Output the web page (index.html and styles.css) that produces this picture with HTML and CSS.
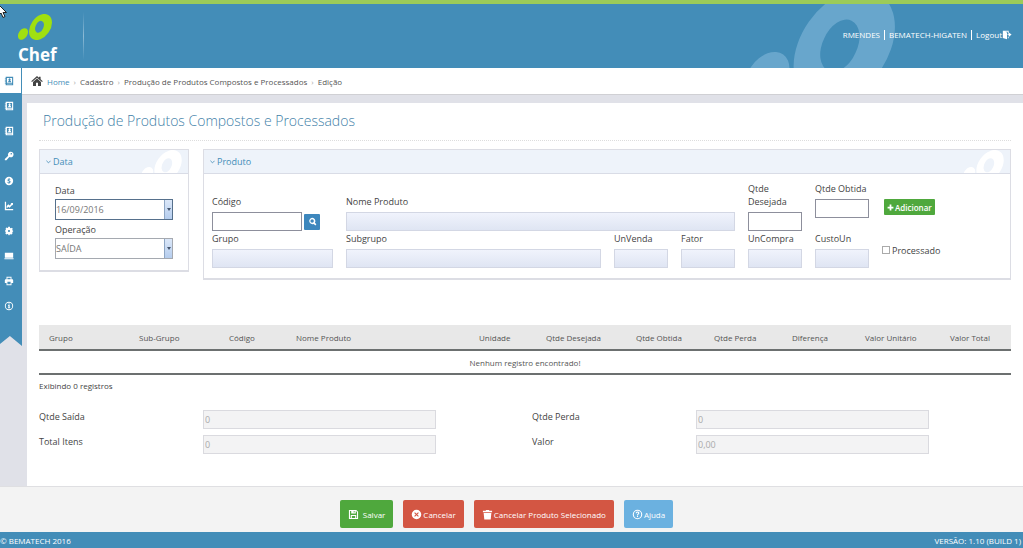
FILE: index.html
```
<!DOCTYPE html>
<html lang="pt-BR">
<head>
<meta charset="utf-8">
<title>Produção de Produtos Compostos e Processados</title>
<link rel="stylesheet" href="styles.css">
</head>
<body>
<svg class="defs" aria-hidden="true">
  <symbol id="mark" viewBox="0 0 34 26">
    <path fill-rule="evenodd" d="M14.47 7.38A9.8 14.3 35 1 1 30.53 18.62A9.8 14.3 35 1 1 14.47 7.38ZM17.97 11.150A3.900 6 25 1 1 25.030 14.450A3.900 6 25 1 1 17.970 11.150Z"/>
    <path d="M1.480 17.480A4.300 6.300 35 1 1 8.520 22.520A4.300 6.300 35 1 1 1.480 17.480Z"/>
  </symbol>
  <symbol id="book" viewBox="0 0 12 12">
    <path fill-rule="evenodd" d="M2 1h9v10H2V9H1V8h1V6.500H1v-1h1V4H1V3h1zM3.500 2.300v5.900h6.200V2.300zM3.500 9.200v.8h6.200v-.8z"/>
    <path d="M5 7.500c0-1.300.6-1.800 1.200-2a1.300 1.300 0 1 1 1 0c.7.200 1.300.7 1.300 2z"/>
  </symbol>
  <symbol id="key" viewBox="0 0 12 12"><path fill-rule="evenodd" d="M8 1a3.300 3.300 0 1 1-1.600 6.100L3 11H1v-1.500l4.100-3.700A3.300 3.300 0 0 1 8 1zM8.700 2.500a.9.900 0 1 0 .1 1.800.9.900 0 0 0-.1-1.800z"/></symbol>
  <symbol id="money" viewBox="0 0 12 12"><path fill-rule="evenodd" d="M6 1a5 5 0 1 1 0 10A5 5 0 0 1 6 1zM5.600 2.500v.7C4 3.500 3.700 6 5.500 6.400c1.300.3 1.100 1.300.3 1.300-.6 0-.8-.3-.9-.7l-1 .2c.1.700.7 1.200 1.500 1.400v.8h1v-.8c1.900-.4 2-2.800.2-3.200-1.400-.3-1.200-1.200-.5-1.200.4 0 .6.200.7.500l1-.2c-.1-.7-.6-1.100-1.200-1.300v-.7z"/></symbol>
  <symbol id="chart" viewBox="0 0 12 12"><path d="M1 1h1.500v8.500H11V11H1zM3.200 9V6l2-2.200 1.500 1.500 2-2-.8-.8h2.900v2.900l-.8-.8L6.700 8 5.200 6.900z"/></symbol>
  <symbol id="gear" viewBox="0 0 12 12"><path fill-rule="evenodd" d="M5 1h2l.3 1.300 1 .4 1.200-.7 1 1.400-.6 1 .4 1L11.200 6l-1 1.300-.3 1 .3 1-1.300 1-1.200-.5-.8.4L6.500 11h-1l-.5-1.100-1-.3-1.200.6-1.200-1.300.6-1.100-.3-1L1 6l1-1.300.3-1-.4-.9 1.300-1 1.100.6.6-.3zM6 4.700a1.300 1.300 0 1 0 0 2.600 1.300 1.300 0 0 0 0-2.600z"/></symbol>
  <symbol id="screen" viewBox="0 0 12 12"><path d="M1 2h10v6.200H1zM.5 8.800h11v1.200H.5z"/></symbol>
  <symbol id="print" viewBox="0 0 12 12"><path fill-rule="evenodd" d="M3 1h6v3h1a1 1 0 0 1 1 1v3.500H9V11H3V8.500H1V5a1 1 0 0 1 1-1h1zM4.100 2v2h3.800V2zM4.100 7v3h3.800V7z"/></symbol>
  <symbol id="info" viewBox="0 0 12 12"><path fill-rule="evenodd" d="M6 1a5 5 0 1 1 0 10A5 5 0 0 1 6 1zM6 2.100a3.900 3.900 0 1 0 0 7.800 3.900 3.900 0 0 0 0-7.800z"/><path d="M5.300 2.900h1.500v1.300H5.300zM4.800 4.900h2v3h.6v.9H4.700v-.9h.6V5.800h-.5z"/></symbol>
  <symbol id="home" viewBox="0 0 12 12"><path d="M6 1l2 1.800V1.700h1.600v2.600L11.800 6.300l-.8.800L6 2.700 1 7.100l-.8-.8zM6 3.500l4 3.600V11H7V7.800H5V11H2V7.100z"/></symbol>
  <symbol id="exit" viewBox="0 0 12 12"><path fill-rule="evenodd" d="M1 1h7v3H7V2H4l2 1v8L1 9.500zM7 8.500h1V5.800H6.500V4.700H8V3l3.500 2.500L8 8.500V10H7z"/></symbol>
  <symbol id="search" viewBox="0 0 12 12"><path fill-rule="evenodd" d="M5.500 1a4.300 4.300 0 0 1 3.700 6.600l2 2.200-1.400 1.400-2.100-2A4.300 4.300 0 1 1 5.500 1zM5.500 3a2.300 2.300 0 1 0 0 4.600 2.300 2.300 0 0 0 0-4.600z"/></symbol>
  <symbol id="plus" viewBox="0 0 12 12"><path d="M4.500 1h3v3.500H11v3H7.500V11h-3V7.500H1v-3h3.500z"/></symbol>
  <symbol id="save" viewBox="0 0 12 12"><path fill-rule="evenodd" d="M1 1h8l2 2v8H1zM2.200 2.200v7.600H3V6.500h6v3.300h.8V3.400L8.500 2.200V5H3.500V2.200zM6.200 2.200v1.600h1V2.200zM4.200 7.600v2.200h3.600V7.600z"/></symbol>
  <symbol id="times" viewBox="0 0 12 12"><path fill-rule="evenodd" d="M6 .8a5.200 5.200 0 1 1 0 10.400A5.200 5.200 0 0 1 6 .8zM4.300 3.500l-.8.800L5.200 6 3.500 7.700l.8.800L6 6.800l1.700 1.700.8-.8L6.800 6l1.700-1.700-.8-.8L6 5.200z"/></symbol>
  <symbol id="trash" viewBox="0 0 12 12"><path d="M4.200 1h3.600v1H11v1.600H1V2h3.200zM1.800 4.300h8.400L9.500 11.500h-7z"/></symbol>
  <symbol id="help" viewBox="0 0 12 12"><path fill-rule="evenodd" d="M6 .8a5.200 5.200 0 1 1 0 10.400A5.200 5.200 0 0 1 6 .8zM6 2a4 4 0 1 0 0 8 4 4 0 0 0 0-8z"/><path d="M4 4.600C4.200 2.200 8 2.300 8 4.500c0 1.200-1.400 1.300-1.400 2.300H5.400C5.400 5.300 6.700 5.300 6.700 4.500c0-.8-1.300-.8-1.400.2zM5.400 7.400h1.200v1.200H5.400z"/></symbol>
</svg>

<svg class="pointer" viewBox="0 0 8 16" aria-hidden="true"><path d="M-3.500.5 6.500 10.500H3l2 4-2 1-2-4.500-2 2z"/></svg>

<header class="topbar">
  <svg class="topbar-mark" aria-hidden="true"><use href="#mark"/></svg>
  <div class="brand">
    <svg class="brand-mark" aria-hidden="true"><use href="#mark"/></svg>
    <span class="brand-name">Chef</span>
  </div>
  <div class="topbar-rule"></div>
  <ul class="user">
    <li>RMENDES</li>
    <li>BEMATECH-HIGATEN</li>
    <li><a href="#">Logout<svg class="icon" aria-hidden="true"><use href="#exit"/></svg></a></li>
  </ul>
</header>

<div class="shell">
  <aside class="sidebar">
    <nav class="menu" aria-label="Menu">
      <a class="menu-item active" href="#" aria-label="Cadastro"><svg class="icon"><use href="#book"/></svg></a>
      <a class="menu-item" href="#" aria-label="Estoque"><svg class="icon"><use href="#book"/></svg></a>
      <a class="menu-item" href="#" aria-label="Produtos"><svg class="icon"><use href="#book"/></svg></a>
      <a class="menu-item" href="#" aria-label="Acesso"><svg class="icon"><use href="#key"/></svg></a>
      <a class="menu-item" href="#" aria-label="Financeiro"><svg class="icon"><use href="#money"/></svg></a>
      <a class="menu-item" href="#" aria-label="Gráficos"><svg class="icon"><use href="#chart"/></svg></a>
      <a class="menu-item" href="#" aria-label="Configuração"><svg class="icon"><use href="#gear"/></svg></a>
      <a class="menu-item" href="#" aria-label="Terminal"><svg class="icon"><use href="#screen"/></svg></a>
      <a class="menu-item" href="#" aria-label="Relatórios"><svg class="icon"><use href="#print"/></svg></a>
      <a class="menu-item" href="#" aria-label="Informações"><svg class="icon"><use href="#info"/></svg></a>
    </nav>
  </aside>

  <div class="main">
    <nav class="crumbs" aria-label="Trilha">
      <svg class="icon home" aria-hidden="true"><use href="#home"/></svg>
      <a href="#">Home</a><i>›</i><span>Cadastro</span><i>›</i><span>Produção de Produtos Compostos e Processados</span><i>›</i><span>Edição</span>
    </nav>

    <main class="page">
      <h1>Produção de Produtos Compostos e Processados</h1>

      <div class="panels">
        <section class="panel">
          <h2><svg class="chev" viewBox="0 0 6 4" aria-hidden="true"><path d="M.5.500 3 3 5.500.5"/></svg>Data<svg class="panel-mark" aria-hidden="true"><use href="#mark"/></svg></h2>
          <div class="panel-body stack">
            <label for="data">Data</label>
            <div class="combo focus"><input id="data" value="16/09/2016"><button type="button" class="combo-btn" aria-label="Abrir calendário"></button></div>
            <label for="oper">Operação</label>
            <div class="combo"><select id="oper"><option>SAÍDA</option></select><span class="combo-btn"></span></div>
          </div>
        </section>

        <section class="panel">
          <h2><svg class="chev" viewBox="0 0 6 4" aria-hidden="true"><path d="M.5.500 3 3 5.500.5"/></svg>Produto<svg class="panel-mark" aria-hidden="true"><use href="#mark"/></svg></h2>
          <div class="panel-body grid">
            <div class="field w2 end"><label for="codigo">Código</label>
              <div class="lookup"><input id="codigo"><button type="button" aria-label="Pesquisar"><svg class="icon"><use href="#search"/></svg></button></div></div>
            <div class="field w6 end"><label for="nome">Nome Produto</label><input id="nome" readonly></div>
            <div class="field end"><label for="desejada">Qtde Desejada</label><input id="desejada"></div>
            <div class="field"><label for="obtida">Qtde Obtida</label><input id="obtida"></div>
            <button type="button" class="add w2"><svg class="icon" aria-hidden="true"><use href="#plus"/></svg>Adicionar</button>

            <div class="field w2"><label for="grupo">Grupo</label><input id="grupo" readonly></div>
            <div class="field w4"><label for="subgrupo">Subgrupo</label><input id="subgrupo" readonly></div>
            <div class="field"><label for="unvenda">UnVenda</label><input id="unvenda" readonly></div>
            <div class="field"><label for="fator">Fator</label><input id="fator" readonly></div>
            <div class="field"><label for="uncompra">UnCompra</label><input id="uncompra" readonly></div>
            <div class="field"><label for="custoun">CustoUn</label><input id="custoun" readonly></div>
            <label class="check"><input type="checkbox">Processado</label>
          </div>
        </section>
      </div>

      <table class="items">
        <colgroup><col class="c89"><col class="c89"><col class="c67"><col class="c183"><col class="c67"><col class="c89"><col class="c78"><col class="c78"><col class="c73"><col class="c85"><col></colgroup>
        <thead><tr><th>Grupo</th><th>Sub-Grupo</th><th>Código</th><th>Nome Produto</th><th>Unidade</th><th>Qtde Desejada</th><th>Qtde Obtida</th><th>Qtde Perda</th><th>Diferença</th><th>Valor Unitário</th><th>Valor Total</th></tr></thead>
        <tbody><tr><td colspan="11">Nenhum registro encontrado!</td></tr></tbody>
      </table>
      <p class="count">Exibindo 0 registros</p>

      <div class="totals">
        <label for="saida">Qtde Saída</label><input id="saida" value="0" disabled>
        <label for="perda">Qtde Perda</label><input id="perda" value="0" disabled>
        <label for="itens">Total Itens</label><input id="itens" value="0" disabled>
        <label for="valor">Valor</label><input id="valor" value="0,00" disabled>
      </div>
    </main>
  </div>
</div>

<div class="actions">
  <button type="button" class="btn green"><svg class="icon" aria-hidden="true"><use href="#save"/></svg><span>Salvar</span></button>
  <button type="button" class="btn red"><svg class="icon" aria-hidden="true"><use href="#times"/></svg>Cancelar</button>
  <button type="button" class="btn red"><svg class="icon" aria-hidden="true"><use href="#trash"/></svg>Cancelar Produto Selecionado</button>
  <button type="button" class="btn sky"><svg class="icon" aria-hidden="true"><use href="#help"/></svg>Ajuda</button>
</div>
<footer class="footer"><span>© BEMATECH 2016</span><span>VERSÃO: 1.10 (BUILD 1)</span></footer>
</body>
</html>
```
FILE: styles.css
```
* { box-sizing: border-box; }
body {
  margin: 0;
  min-height: 100vh;
  display: flex;
  flex-direction: column;
  background: #fff;
  color: #444;
  font: 8px/13px "Open Sans", "Noto Sans", sans-serif;
}
input, select, button { font: inherit; color: inherit; margin: 0; border-radius: 0; }
input { min-width: 0; }
a { color: inherit; text-decoration: none; }
.defs { display: none; }
.icon { width: 10px; height: 10px; fill: currentColor; flex: none; }
.pointer {
  position: absolute;
  z-index: 2;
  top: 2px;
  left: 0;
  width: 8px;
  height: 16px;
  fill: #fff;
  stroke: #222;
}

.topbar {
  position: relative;
  overflow: hidden;
  display: flex;
  height: 68px;
  border-top: 4px solid #9ccb59;
  background: #438db8;
  color: #fff;
}
.topbar::before {
  content: "";
  position: absolute;
  inset: -4px 0 auto;
  height: 1px;
  background: #d5e6b4;
}
.topbar-mark {
  position: absolute;
  top: -15px;
  right: 128px;
  width: 150px;
  height: 115px;
  fill: #68a6cc;
}
.brand { width: 83px; padding: 10px 18px 0; }
.brand-mark { display: block; width: 34px; height: 26px; fill: #a0e010; }
.brand-name { display: block; font-size: 17px; font-weight: 700; line-height: 30px; }
.topbar-rule { width: 1px; margin: 8px 0; background: linear-gradient(#438db8, #8dbad5 50%, #438db8); }
.user {
  position: relative;
  display: flex;
  align-items: center;
  margin: 0 11px 0 auto;
  padding: 0 0 3px;
  list-style: none;
  line-height: 10px;
}
.user li + li { margin-left: 4px; padding-left: 4px; border-left: 1px solid #fff; }
.user a { display: flex; }

.shell { flex: 1; display: flex; background: #e0e1e8; }
.sidebar { width: 22px; }
.menu {
  height: 278px;
  background: #438db8;
  clip-path: polygon(0 0, 100% 0, 100% 100%, 45% 268px, 0 276px);
  color: #fff;
}
.menu-item { display: flex; align-items: center; height: 25px; padding-left: 4px; }
.menu-item.active { margin-right: 1px; background: #fff; color: #438db8; }

.main { flex: 1; display: flex; flex-direction: column; min-width: 0; }
.crumbs {
  display: flex;
  align-items: center;
  height: 27px;
  padding-left: 9px;
  border-bottom: 1px solid #d0d0d4;
  background: #fff;
  color: #555;
}
.crumbs .home { width: 12px; height: 12px; margin-right: 4px; fill: #444; }
.crumbs a { color: #438db8; }
.crumbs i { margin: 0 4px; color: #aaa; font-style: normal; }

.page { flex: 1; margin: 8px 0 0 5px; padding: 8px 12px 0; background: #fff; }
h1 {
  margin: 0 0 8px;
  padding: 0 4px 9px;
  border-bottom: 1px dotted #ddd;
  color: #3f7fa8;
  font-size: 14px;
  font-weight: 300;
  line-height: 20px;
}

.panels { display: grid; grid-template-columns: 150px 1fr; align-items: start; gap: 14px; font-size: 9px; }
.panel { border: 1px solid #dcdde4; border-bottom-width: 2px; }
.panel h2 {
  display: flex;
  align-items: center;
  gap: 2px;
  height: 24px;
  margin: 0;
  padding-left: 6px;
  overflow: hidden;
  border-bottom: 1px solid #d9dce6;
  background: #eef3fa;
  color: #438db8;
  font-size: 9px;
  font-weight: 400;
}
.chev { width: 5px; height: 4px; fill: none; stroke: #438db8; }
.panel-mark { align-self: start; width: 41px; height: 31px; margin: 0 6px 0 auto; fill: #fff; }
.panel-body { padding: 8px 7px 10px 8px; }
.stack { display: flex; flex-direction: column; padding: 8px 15px 10px; }
.stack label { line-height: 17px; }
.combo { display: flex; height: 21px; margin-bottom: 1px; border: 1px solid #a5a9b0; color: #777; }
.combo.focus { border-color: #56708c; }
.combo input, .combo select { flex: 1; appearance: none; padding: 0; border: 0; background: none; outline: 0; }
.combo-btn {
  display: grid;
  place-items: center;
  width: 8px;
  padding: 0;
  border: 0;
  border-left: 1px solid #8ea6c4;
  background: linear-gradient(#dbe7f8, #b5cdee);
}
.combo-btn::before { content: ""; border: 2px solid transparent; border-top: 3px solid #45566e; border-bottom: 0; }

.grid { display: grid; grid-template-columns: repeat(12, minmax(0, 1fr)); column-gap: 13px; row-gap: 1px; }
.w2 { grid-column: span 2; }
.w4 { grid-column: span 4; }
.w6 { grid-column: span 6; }
.field { display: flex; flex-direction: column; gap: 4px; }
.end { justify-content: flex-end; }
.field input { width: 100%; height: 19px; padding: 0 2px; border: 1px solid #8d8f9c; }
.field input:read-only { border-color: #d3d7e4; background: linear-gradient(#f0f3fc, #dfe5f3); }
.lookup { display: grid; grid-template-columns: 1fr 16px; gap: 2px; padding-right: 13px; }
.lookup button {
  display: grid;
  place-items: center;
  align-self: center;
  height: 16px;
  padding: 0;
  border: 0;
  border-radius: 1px;
  background: #3d87bd;
  color: #fff;
}
.lookup .icon { width: 9px; height: 9px; }
.add {
  display: flex;
  align-items: center;
  gap: 1px;
  justify-self: start;
  height: 16px;
  margin: 17px 0 0 2px;
  padding: 0 3px;
  border: 0;
  border-radius: 1px;
  background: #4fa83d;
  color: #fff;
  font-size: 8px;
  font-weight: 600;
}
.add .icon { width: 7px; height: 7px; }
.check { grid-column: span 2; display: flex; align-items: center; gap: 2px; }
.check input { appearance: none; width: 8px; height: 8px; border: 1px solid #aaa; background: #fff; }

.items { width: 100%; margin-top: 45px; border-collapse: collapse; table-layout: fixed; color: #555; }
.c67 { width: 67px; }
.c73 { width: 73px; }
.c78 { width: 78px; }
.c85 { width: 85px; }
.c89 { width: 90px; }
.c183 { width: 183px; }
.items th { height: 25px; padding: 0 0 0 10px; background: #e8e8e8; font-weight: 400; text-align: left; white-space: nowrap; }
.items td { height: 24px; padding: 0; border-top: 2px solid #6c7070; border-bottom: 2px solid #6c7070; text-align: center; }
.count { margin: 4px 0 18px; }

.totals {
  display: grid;
  grid-template-columns: 164px minmax(0, 1fr) 96px 164px minmax(0, 1fr) 82px;
  row-gap: 6px;
  font-size: 9px;
}
.totals label { line-height: 13px; }
.totals label:nth-of-type(odd) { grid-column: 1; }
.totals label:nth-of-type(even) { grid-column: 4; }
.totals input { height: 19px; padding: 0 1px; border: 1px solid #dadadf; background: #f3f3f4; color: #aaa; }

.actions {
  display: flex;
  justify-content: center;
  align-items: center;
  gap: 10px;
  height: 46px;
  padding: 8px 10px 0 0;
  border-top: 1px solid #dfdfe2;
  background: #f3f3f3;
}
.btn {
  display: flex;
  align-items: center;
  gap: 1px;
  height: 28px;
  padding: 2px 8px 0;
  border: 0;
  border-radius: 2px;
  color: #fff;
  white-space: nowrap;
}
.btn .icon { width: 11px; height: 11px; }
.green { gap: 4px; background: #4fa83d; }
.red { background: #d35643; }
.sky { background: #6bb1e0; }

.footer {
  display: flex;
  justify-content: space-between;
  align-items: center;
  height: 16px;
  padding: 0 2px 0 0;
  background: #438db8;
  color: #fff;
}
```
